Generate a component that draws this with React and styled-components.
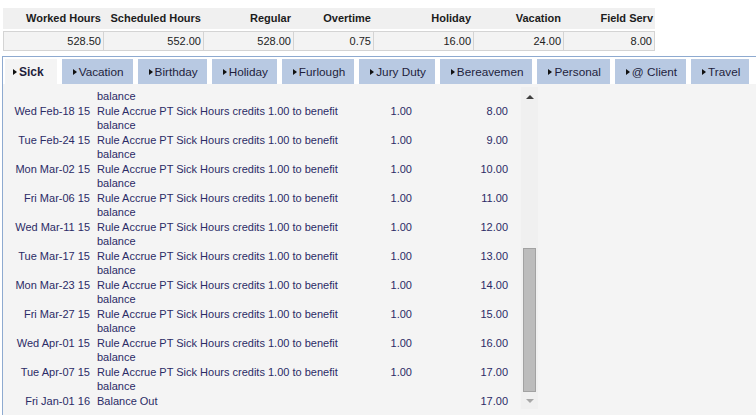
import React, { useLayoutEffect, useRef, useState } from 'react'
import styled, { createGlobalStyle } from 'styled-components'

const GlobalStyle = createGlobalStyle`
    html, body {
        margin: 0;
        padding: 0;
        background: #ffffff;
        font-family: "Liberation Sans", Arial, sans-serif;
        overflow: hidden;
    }
`

const Page = styled.div`
    width: 756px;
    height: 415px;
    padding-top: 8px;
    box-sizing: border-box;
    overflow: hidden;
`

const Totals = styled.div`
    margin-left: 3px;
    width: 652px;
    display: grid;
    grid-template-columns: 100px 100px 90px 80px 100px 90px 92px;
`

const HeadCell = styled.div`
    background: #f0f0f0;
    height: 21px;
    line-height: 21px;
    text-align: right;
    padding-right: 2px;
    font-size: 11px;
    font-weight: bold;
    color: #1c1c1c;
    white-space: nowrap;
    overflow: hidden;
`

const ValueCell = styled.div`
    margin-top: 2px;
    background: #f3f3f3;
    height: 18px;
    line-height: 18px;
    text-align: right;
    padding-right: 2px;
    font-size: 11px;
    color: #222222;
    border-top: 1px solid #d4d4d4;
    border-bottom: 1px solid #d4d4d4;
    border-left: 1px solid #d4d4d4;
    &:last-child {
        border-right: 1px solid #d4d4d4;
    }
`

const Panel = styled.div`
    margin-top: 5px;
    margin-left: 2px;
    border-top: 1px solid #8eaad0;
    border-left: 1px solid #8eaad0;
`

const TabBar = styled.div`
    display: flex;
    gap: 5px;
    padding: 2px 0 0 2px;
    background: #ffffff;
`

const Tab = styled.div`
    height: 25px;
    display: flex;
    align-items: center;
    gap: 2px;
    padding: ${props => props.active ? '0 13px 0 8px' : '0 9px 0 11px'};
    font-size: ${props => props.active ? '12px' : '11.75px'};
    color: #1e1e3c;
    white-space: nowrap;
    cursor: pointer;
    background: ${props => props.active ? '#f4f4f4' : '#b8c9e2'};
    font-weight: ${props => props.active ? 'bold' : 'normal'};

    &::before {
        content: '';
        width: 0;
        height: 0;
        border-top: 3px solid transparent;
        border-bottom: 3px solid transparent;
        border-left: 4px solid #111111;
    }
`

const Content = styled.div`
    background: #f4f4f4;
    height: 340px;
    padding-top: 3px;
    display: flex;
`

const ListWrap = styled.div`
    width: 518px;
    height: 322px;
    overflow: hidden;
`

const List = styled.div`
    display: grid;
    grid-template-columns: 91px 245px 73px 96px;
    padding-bottom: 1px;
    font-size: 11px;
    line-height: 14.5px;
    color: #2b2b66;
`

const DateCell = styled.div`
    text-align: right;
    padding-right: 4px;
    white-space: nowrap;
`

const DescCell = styled.div`
    padding-left: 3px;
`

const NumCell = styled.div`
    text-align: right;
`

const ScrollBar = styled.div`
    width: 17px;
    height: 322px;
    background: #f0f0f0;
    display: flex;
    flex-direction: column;
    align-items: center;
`

const ScrollButton = styled.div`
    height: ${props => props.tall ? '20px' : '17px'};
    width: 100%;
    display: flex;
    align-items: center;
    justify-content: center;

    &::before {
        content: '';
        width: 0;
        height: 0;
        border-left: 4px solid transparent;
        border-right: 4px solid transparent;
        ${props => props.down
            ? 'border-top: 4px solid #a8a8a8;'
            : 'border-bottom: 4px solid #404040;'}
    }
`

const Spacer = styled.div`
    flex: 1;
`

const Thumb = styled.div`
    width: 13px;
    height: 144px;
    box-sizing: border-box;
    background: #bcbcbc;
    border: 1px solid #a2a2a2;
`

const totals = [
    ['Worked Hours', '528.50'],
    ['Scheduled Hours', '552.00'],
    ['Regular', '528.00'],
    ['Overtime', '0.75'],
    ['Holiday', '16.00'],
    ['Vacation', '24.00'],
    ['Field Serv', '8.00'],
]

const tabs = ['Sick', 'Vacation', 'Birthday', 'Holiday', 'Furlough', 'Jury Duty', 'Bereavemen', 'Personal', '@ Client', 'Travel']

const accrualDates = [
    'Tue Jan-13 15', 'Mon Jan-19 15', 'Fri Jan-23 15', 'Wed Jan-28 15', 'Tue Feb-03 15',
    'Mon Feb-09 15', 'Fri Feb-13 15', 'Wed Feb-18 15', 'Tue Feb-24 15', 'Mon Mar-02 15',
    'Fri Mar-06 15', 'Wed Mar-11 15', 'Tue Mar-17 15', 'Mon Mar-23 15', 'Fri Mar-27 15',
    'Wed Apr-01 15', 'Tue Apr-07 15',
]

const rows = [
    { date: 'Thu Jan-01 15', desc: 'Balance In', amount: '', balance: '0.00' },
    ...accrualDates.map((date, i) => ({
        date,
        desc: 'Rule Accrue PT Sick Hours credits 1.00 to benefit balance',
        amount: '1.00',
        balance: (i + 1).toFixed(2),
    })),
    { date: 'Fri Jan-01 16', desc: 'Balance Out', amount: '', balance: '17.00' },
]

function App() {
    const [activeTab, setActiveTab] = useState('Sick')
    const listRef = useRef(null)

    useLayoutEffect(() => {
        const el = listRef.current
        if (el) { el.scrollTop = el.scrollHeight - el.clientHeight }
    }, [activeTab])

    return (
        <Page>
            <GlobalStyle />
            <Totals>
                {totals.map(([label]) => <HeadCell key={label}>{label}</HeadCell>)}
                {totals.map(([label, value]) => <ValueCell key={label}>{value}</ValueCell>)}
            </Totals>
            <Panel>
                <TabBar>
                    {tabs.map(tab => (
                        <Tab key={tab} active={tab === activeTab} onClick={() => setActiveTab(tab)}>
                            {tab}
                        </Tab>
                    ))}
                </TabBar>
                <Content>
                    <ListWrap ref={listRef}>
                        <List>
                            {rows.map(row => (
                                <React.Fragment key={row.date}>
                                    <DateCell>{row.date}</DateCell>
                                    <DescCell>{row.desc}</DescCell>
                                    <NumCell>{row.amount}</NumCell>
                                    <NumCell>{row.balance}</NumCell>
                                </React.Fragment>
                            ))}
                        </List>
                    </ListWrap>
                    <ScrollBar>
                        <ScrollButton tall />
                        <Spacer />
                        <Thumb />
                        <ScrollButton down />
                    </ScrollBar>
                </Content>
            </Panel>
        </Page>
    )
}

export default App
